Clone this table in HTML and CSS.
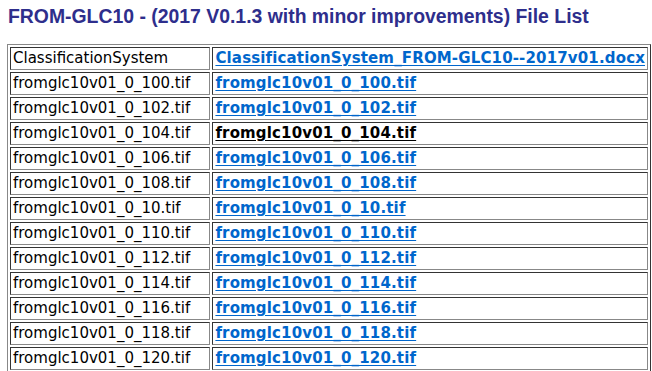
FILE: index.html
```html
<!DOCTYPE html>
<html>
<head>
<meta charset="utf-8">
<link rel="stylesheet" href="styles.css">
</head>
<body>
<h1 class="title">FROM-GLC10 - (2017 V0.1.3 with minor improvements) File List</h1>
<table class="files">
<tr><td>ClassificationSystem</td><td><a href="#">ClassificationSystem_FROM-GLC10--2017v01.docx</a></td></tr>
<tr><td>fromglc10v01_0_100.tif</td><td><a href="#">fromglc10v01_0_100.tif</a></td></tr>
<tr><td>fromglc10v01_0_102.tif</td><td><a href="#">fromglc10v01_0_102.tif</a></td></tr>
<tr><td>fromglc10v01_0_104.tif</td><td><a href="#" class="visited">fromglc10v01_0_104.tif</a></td></tr>
<tr><td>fromglc10v01_0_106.tif</td><td><a href="#">fromglc10v01_0_106.tif</a></td></tr>
<tr><td>fromglc10v01_0_108.tif</td><td><a href="#">fromglc10v01_0_108.tif</a></td></tr>
<tr><td>fromglc10v01_0_10.tif</td><td><a href="#">fromglc10v01_0_10.tif</a></td></tr>
<tr><td>fromglc10v01_0_110.tif</td><td><a href="#">fromglc10v01_0_110.tif</a></td></tr>
<tr><td>fromglc10v01_0_112.tif</td><td><a href="#">fromglc10v01_0_112.tif</a></td></tr>
<tr><td>fromglc10v01_0_114.tif</td><td><a href="#">fromglc10v01_0_114.tif</a></td></tr>
<tr><td>fromglc10v01_0_116.tif</td><td><a href="#">fromglc10v01_0_116.tif</a></td></tr>
<tr><td>fromglc10v01_0_118.tif</td><td><a href="#">fromglc10v01_0_118.tif</a></td></tr>
<tr><td>fromglc10v01_0_120.tif</td><td><a href="#">fromglc10v01_0_120.tif</a></td></tr>
</table>
</body>
</html>
```
FILE: styles.css
```css
body {
  margin: 0;
  padding: 5px 7px;
  background: #fff;
}
.title {
  font-family: "Liberation Sans", Arial, sans-serif;
  font-weight: bold;
  font-size: 19.4px;
  color: #2e2e8c;
  margin: 0 0 16px 1px;
  line-height: 23px;
}
.files {
  border: 1px outset #888;
  border-spacing: 2px;
  width: 644px;
  font-family: "DejaVu Sans", Verdana, sans-serif;
  font-size: 15px;
}
.files td {
  border: 1px inset #888;
  padding: 1px 2px;
  color: #000;
  line-height: 19px;
  white-space: nowrap;
}
.files td:first-child {
  width: 198px;
}
.files a {
  color: #0066cc;
  font-weight: bold;
  letter-spacing: 0.15px;
  text-underline-offset: 2px;
}
.files a.visited {
  color: #000;
}
```
